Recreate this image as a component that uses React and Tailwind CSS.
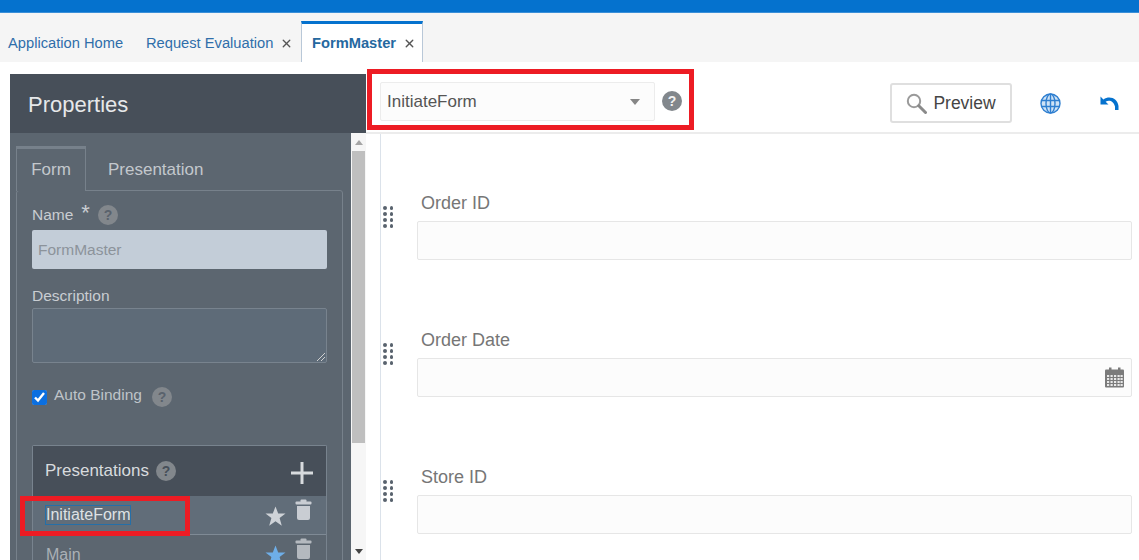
import { X } from 'lucide-react'

function Help({ className = '', mark = 'text-[#59626c]' }) {
  return (
    <span className={`w-5 h-5 rounded-full bg-[#82878c] flex items-center justify-center text-[14px] font-bold shrink-0 ${mark} ${className}`}>?</span>
  )
}

function Grip() {
  return (
    <div className="grid grid-cols-2 gap-x-[3px] gap-y-[2.5px] w-[10px] shrink-0">
      {[0, 1, 2, 3, 4, 5, 6, 7].map(i => (
        <span key={i} className="w-[3.5px] h-[3.5px] rounded-full bg-[#59636e]" />
      ))}
    </div>
  )
}

function Calendar() {
  return (
    <svg width="21" height="21" viewBox="0 0 21 21">
      <rect x="5" y="0.5" width="2.5" height="4" fill="#7b7b7b" />
      <rect x="14" y="0.5" width="2.5" height="4" fill="#7b7b7b" />
      <rect x="1" y="2.5" width="19" height="18" rx="1" fill="#7b7b7b" />
      {[8, 11, 14, 17].map(y =>
        [3, 6.5, 10, 13.5, 16.5].map(x => (
          <rect key={`${x}-${y}`} x={x} y={y} width="2.2" height="2" fill="#e8e8e8" />
        ))
      )}
    </svg>
  )
}

function Trash({ color }) {
  return (
    <svg width="17" height="21" viewBox="0 0 17 21" fill={color}>
      <rect x="5.5" y="0.5" width="6" height="3" rx="1" />
      <rect x="0.5" y="2.5" width="16" height="3" rx="1" />
      <path d="M2 7h13v12a2 2 0 0 1-2 2H4a2 2 0 0 1-2-2z" />
    </svg>
  )
}

function Star({ color }) {
  return (
    <svg width="21" height="21" viewBox="0 0 21 21" fill={color}>
      <path d="M10.5 0.5l2.7 7h7.3l-5.9 4.5 2.2 7.8-6.3-4.6-6.3 4.6 2.2-7.8L0.5 7.5h7.3z" />
    </svg>
  )
}

function Magnifier() {
  return (
    <svg width="21" height="21" viewBox="0 0 21 21" fill="none">
      <circle cx="8" cy="8" r="6.2" stroke="#9a9a9a" strokeWidth="2" />
      <path d="M12.8 12.8L19.5 19.5" stroke="#8a8a8a" strokeWidth="3" strokeLinecap="round" />
    </svg>
  )
}

function GlobeIcon() {
  return (
    <svg width="21" height="21" viewBox="0 0 21 21" fill="#cfe3f6" stroke="#2f7fd0" strokeWidth="1.4" className="ml-[28px] shrink-0">
      <circle cx="10.5" cy="10.5" r="9.5" />
      <ellipse cx="10.5" cy="10.5" rx="4.5" ry="9.5" fill="none" />
      <path d="M10.5 1v19M1.5 7.5h18M1.5 13.5h18" fill="none" />
    </svg>
  )
}

function UndoIcon() {
  return (
    <svg width="19" height="16" viewBox="0 0 19 16" fill="#0572ce" className="ml-[39px] shrink-0">
      <path d="M0.5 1.5L0.5 9.5L8.5 9.5L5.6 6.7C8.8 4.6 13.6 5.6 15 11.5L15 15L18.5 15L18.5 11C17.6 3.6 9.8 0 3.4 4.4z" />
    </svg>
  )
}

function Field({ label, gap = '', calendar }) {
  return (
    <div className={`flex items-start ${gap}`}>
      <div className="pt-[12px] pl-[2px] w-[36px]"><Grip /></div>
      <div className="flex-1">
        <div className="pl-[4px] h-[27px] text-[18px] leading-[18px] text-[#767676]">{label}</div>
        <div className="h-[39px] border border-[#e6e6e6] rounded-[2px] bg-[#fcfcfc] flex items-center justify-end pr-[6px]">
          {calendar && <Calendar />}
        </div>
      </div>
    </div>
  )
}

export default function App() {
  return (
    <div className="w-[1139px] h-[560px] overflow-hidden bg-white flex flex-col font-['Liberation_Sans',Arial,sans-serif]">
      <div className="h-[13px] bg-[#0572ce] border-b border-[#3a8fd8] shrink-0" />

      {/* Tabs */}
      <div className="h-[49px] bg-[#f5f5f5] shrink-0 flex items-end text-[14.7px] text-[#2f6eaa]">
        <div className="h-[40px] pl-[8px] pt-[3px] w-[146px] flex items-center">Application Home</div>
        <div className="h-[40px] w-[155px] pt-[3px] flex items-center">
          Request Evaluation
          <X size={13} strokeWidth={2.5} className="ml-[7px] text-[#555]" />
        </div>
        <div className="h-[41px] w-[122px] bg-white border-x border-[#b9c8d8] border-t-[3px] border-t-[#0572ce] pl-[10px] pt-[1px] flex items-center font-bold text-[#25689f]">
          FormMaster
          <X size={13} strokeWidth={2.5} className="ml-[7px] text-[#555]" />
        </div>
      </div>

      <div className="flex-1 flex pt-[12px] pl-[10px] min-h-0 relative">
        {/* Properties panel */}
        <div className="w-[356px] shrink-0 flex flex-col">
          <div className="h-[59px] bg-[#474f59] flex items-center pl-[18px] pt-[2px] text-[22px] text-[#e6e8ea] shrink-0">Properties</div>
          <div className="flex-1 flex bg-[#5c6670] min-h-0">
            <div className="flex-1 pl-[6px] pr-[8px] pt-[12px] min-w-0">
              <div className="flex h-[45px] text-[17px] text-[#c3c8cd]">
                <div className="w-[70px] border-x border-t-[3px] border-[#77818b] border-b-0 flex items-center justify-center relative top-[1px] bg-[#5c6670] z-10">Form</div>
                <div className="pl-[22px] pt-[4px] flex items-center">Presentation</div>
              </div>
              <div className="border border-[#77818b] rounded-t-[3px] px-[15px] pt-[13px] h-[400px]">
                <div className="flex items-center h-[22px] text-[15.5px] text-[#c9cdd2]">
                  Name
                  <span className="ml-[8px] text-[22px] leading-[20px] relative -top-[2px]">*</span>
                  <Help className="ml-[8px]" />
                </div>
                <div className="mt-[4px] h-[39px] bg-[#c3cdd8] rounded-[2px] flex items-center pl-[6px] text-[15.5px] text-[#8c939b]">FormMaster</div>
                <div className="mt-[15px] h-[24px] text-[15.5px] text-[#c9cdd2]">Description</div>
                <div className="h-[55px] bg-[#5e6b78] border border-[#78838e] rounded-[2px] relative">
                  <svg width="10" height="10" viewBox="0 0 10 10" className="absolute right-0 bottom-0" stroke="#d0d0d0" strokeWidth="1">
                    <path d="M1 9L9 1M5 9l4-4" />
                  </svg>
                </div>
                <div className="mt-[24px] flex items-center h-[20px] text-[15.5px] text-[#bfc4c9]">
                  <input type="checkbox" checked readOnly className="w-[15px] h-[15px] accent-[#0b6fe0] shrink-0" />
                  <span className="ml-[7px] relative -top-[2px]">Auto Binding</span>
                  <Help className="ml-[10px]" />
                </div>
                <div className="mt-[38px] border border-[#78838e] border-b-0 rounded-t-[2px]">
                  <div className="h-[50px] bg-[#474f59] flex items-center pl-[12px] pr-[13px] text-[17px] text-[#d8dbde]">
                    Presentations
                    <Help className="ml-[7px]" mark="text-[#474f59]" />
                    <svg width="22" height="22" viewBox="0 0 22 22" className="ml-auto relative top-[2px]" fill="#d8dbde">
                      <rect x="9.5" y="0" width="3" height="22" />
                      <rect x="0" y="9.5" width="22" height="3" />
                    </svg>
                  </div>
                  <div className="h-[39px] bg-[#616d79] border-b border-[#7f8a95] flex items-center pl-[13px] pr-[14px] text-[16px] text-[#dfe2e5]">
                    <span className="outline outline-[1.5px] outline-[#256fa8] leading-[18px]">InitiateForm</span>
                    <span className="ml-auto relative top-[1px]"><Star color="#cfd3d8" /></span>
                    <span className="ml-[9px] relative -top-[6px]"><Trash color="#c9cdd3" /></span>
                  </div>
                  <div className="h-[39px] flex items-center pl-[13px] pr-[14px] text-[16px] text-[#aab0b6]">
                    Main
                    <span className="ml-auto relative top-[1px]"><Star color="#6eaee8" /></span>
                    <span className="ml-[9px] relative -top-[6px]"><Trash color="#b4b9bf" /></span>
                  </div>
                </div>
              </div>
            </div>

            {/* Scrollbar */}
            <div className="w-[15px] shrink-0 bg-[#f6f6f6] flex flex-col items-center">
              <div className="h-[18px] flex items-center justify-center">
                <span className="border-x-[4px] border-x-transparent border-b-[5px] border-b-[#a5a5a5]" />
              </div>
              <div className="w-[13px] h-[292px] bg-[#bfbfbf]" />
              <div className="flex-1" />
              <div className="h-[18px] flex items-center justify-center">
                <span className="border-x-[4px] border-x-transparent border-t-[5px] border-t-[#444]" />
              </div>
            </div>
          </div>
        </div>

        {/* Form canvas */}
        <div className="flex-1 flex flex-col min-w-0">
          <div className="h-[60px] shrink-0 flex items-center pl-[14px] pr-[20px] border-b-2 border-[#ececec]">
            <div className="flex items-center -mt-[4px]">
              <div className="w-[275px] h-[39px] border border-[#ececec] rounded-[2px] bg-[#fcfcfc] flex items-center pl-[6px] pt-[1px] pr-[14px] text-[17px] text-[#555]">
                InitiateForm
                <span className="ml-auto border-x-[5px] border-x-transparent border-t-[6px] border-t-[#868686]" />
              </div>
              <Help className="ml-[7px]" mark="text-[#f2f2f2]" />
            </div>
            <button className="ml-auto w-[122px] h-[40px] border-2 border-[#dfdfdf] rounded-[3px] flex items-center justify-center gap-[6px] text-[17.5px] text-[#454545]">
              <Magnifier />
              Preview
            </button>
            <GlobeIcon />
            <UndoIcon />
          </div>
          <div className="flex-1 ml-[14px] border-l border-[#dbe2ea] pr-[7px] pt-[60px]">
            <Field label="Order ID" />
            <Field label="Order Date" gap="mt-[71px]" calendar />
            <Field label="Store ID" gap="mt-[71px]" />
          </div>
        </div>

        {/* Red highlights */}
        <div className="absolute left-[367px] top-[7px] w-[327px] h-[61px] border-[5px] border-[#ed1c24]" />
        <div className="absolute left-[20px] top-[434px] w-[170px] h-[40px] border-[5px] border-[#ed1c24]" />
      </div>
    </div>
  )
}
